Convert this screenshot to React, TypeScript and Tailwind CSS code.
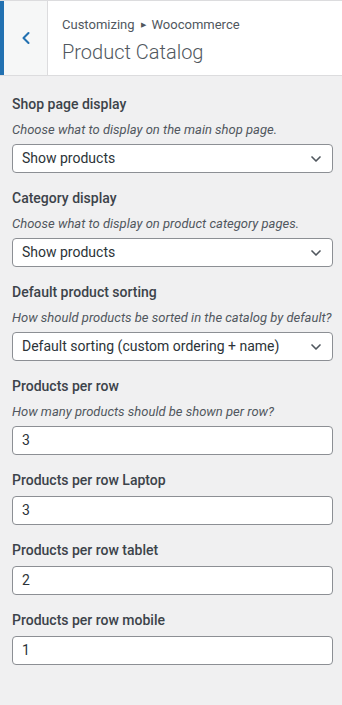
import { ChevronDown, ChevronLeft } from "lucide-react";

type Field = {
  label: string;
  description?: string;
  kind: "select" | "number";
  value: string;
};

const fields: Field[] = [
  {
    label: "Shop page display",
    description: "Choose what to display on the main shop page.",
    kind: "select",
    value: "Show products",
  },
  {
    label: "Category display",
    description: "Choose what to display on product category pages.",
    kind: "select",
    value: "Show products",
  },
  {
    label: "Default product sorting",
    description: "How should products be sorted in the catalog by default?",
    kind: "select",
    value: "Default sorting (custom ordering + name)",
  },
  {
    label: "Products per row",
    description: "How many products should be shown per row?",
    kind: "number",
    value: "3",
  },
  { label: "Products per row Laptop", kind: "number", value: "3" },
  { label: "Products per row tablet", kind: "number", value: "2" },
  { label: "Products per row mobile", kind: "number", value: "1" },
];

function Control({ field }: { field: Field }) {
  const isSelect = field.kind === "select";
  return (
    <div className="mb-[15px]">
      <div className="text-[14px] font-medium leading-[20px] text-[#3c434a]">{field.label}</div>
      {field.description && (
        <div className="mt-[7px] text-[13px] italic leading-[18px] text-[#50575e]">
          {field.description}
        </div>
      )}
      <div
        className={
          field.description
            ? "mt-[5px] flex h-[29px] items-center justify-between rounded-[4px] border border-[#8c8f94] bg-white pl-[9px] pr-[8px] text-[14px] text-[#2c3338]"
            : "mt-[6px] flex h-[29px] items-center justify-between rounded-[4px] border border-[#8c8f94] bg-white pl-[9px] pr-[8px] text-[14px] text-[#2c3338]"
        }
      >
        <span>{field.value}</span>
        {isSelect && <ChevronDown className="h-[16px] w-[16px] text-[#50575e]" strokeWidth={2.5} />}
      </div>
    </div>
  );
}

export default function App() {
  return (
    <div
      className="min-h-[705px] w-[342px] bg-[#f0f0f1]"
      style={{ fontFamily: 'Roboto, "Noto Sans", sans-serif' }}
    >
      {/* Header */}
      <div className="flex h-[76px] border-y border-[#dcdcde] bg-white">
        <div className="w-[4px] bg-[#2271b1]" />
        <div className="flex w-[44px] items-center justify-center border-r border-[#dcdcde] bg-[#f6f7f7]">
          <ChevronLeft className="h-[20px] w-[20px] text-[#2271b1]" strokeWidth={2.5} />
        </div>
        <div className="pl-[14px] pt-[14px]">
          <div className="flex items-center text-[13px] leading-[20px] text-[#50575e]">
            Customizing
            <span className="mx-[6px] text-[7px] leading-none">▶</span>
            Woocommerce
          </div>
          <div className="mt-[4px] text-[20px] font-light leading-[26px] text-[#50575e]">
            Product Catalog
          </div>
        </div>
      </div>

      {/* Controls */}
      <div className="pl-[12px] pr-[9px] pt-[18px]">
        {fields.map((f) => (
          <Control key={f.label} field={f} />
        ))}
      </div>
    </div>
  );
}
